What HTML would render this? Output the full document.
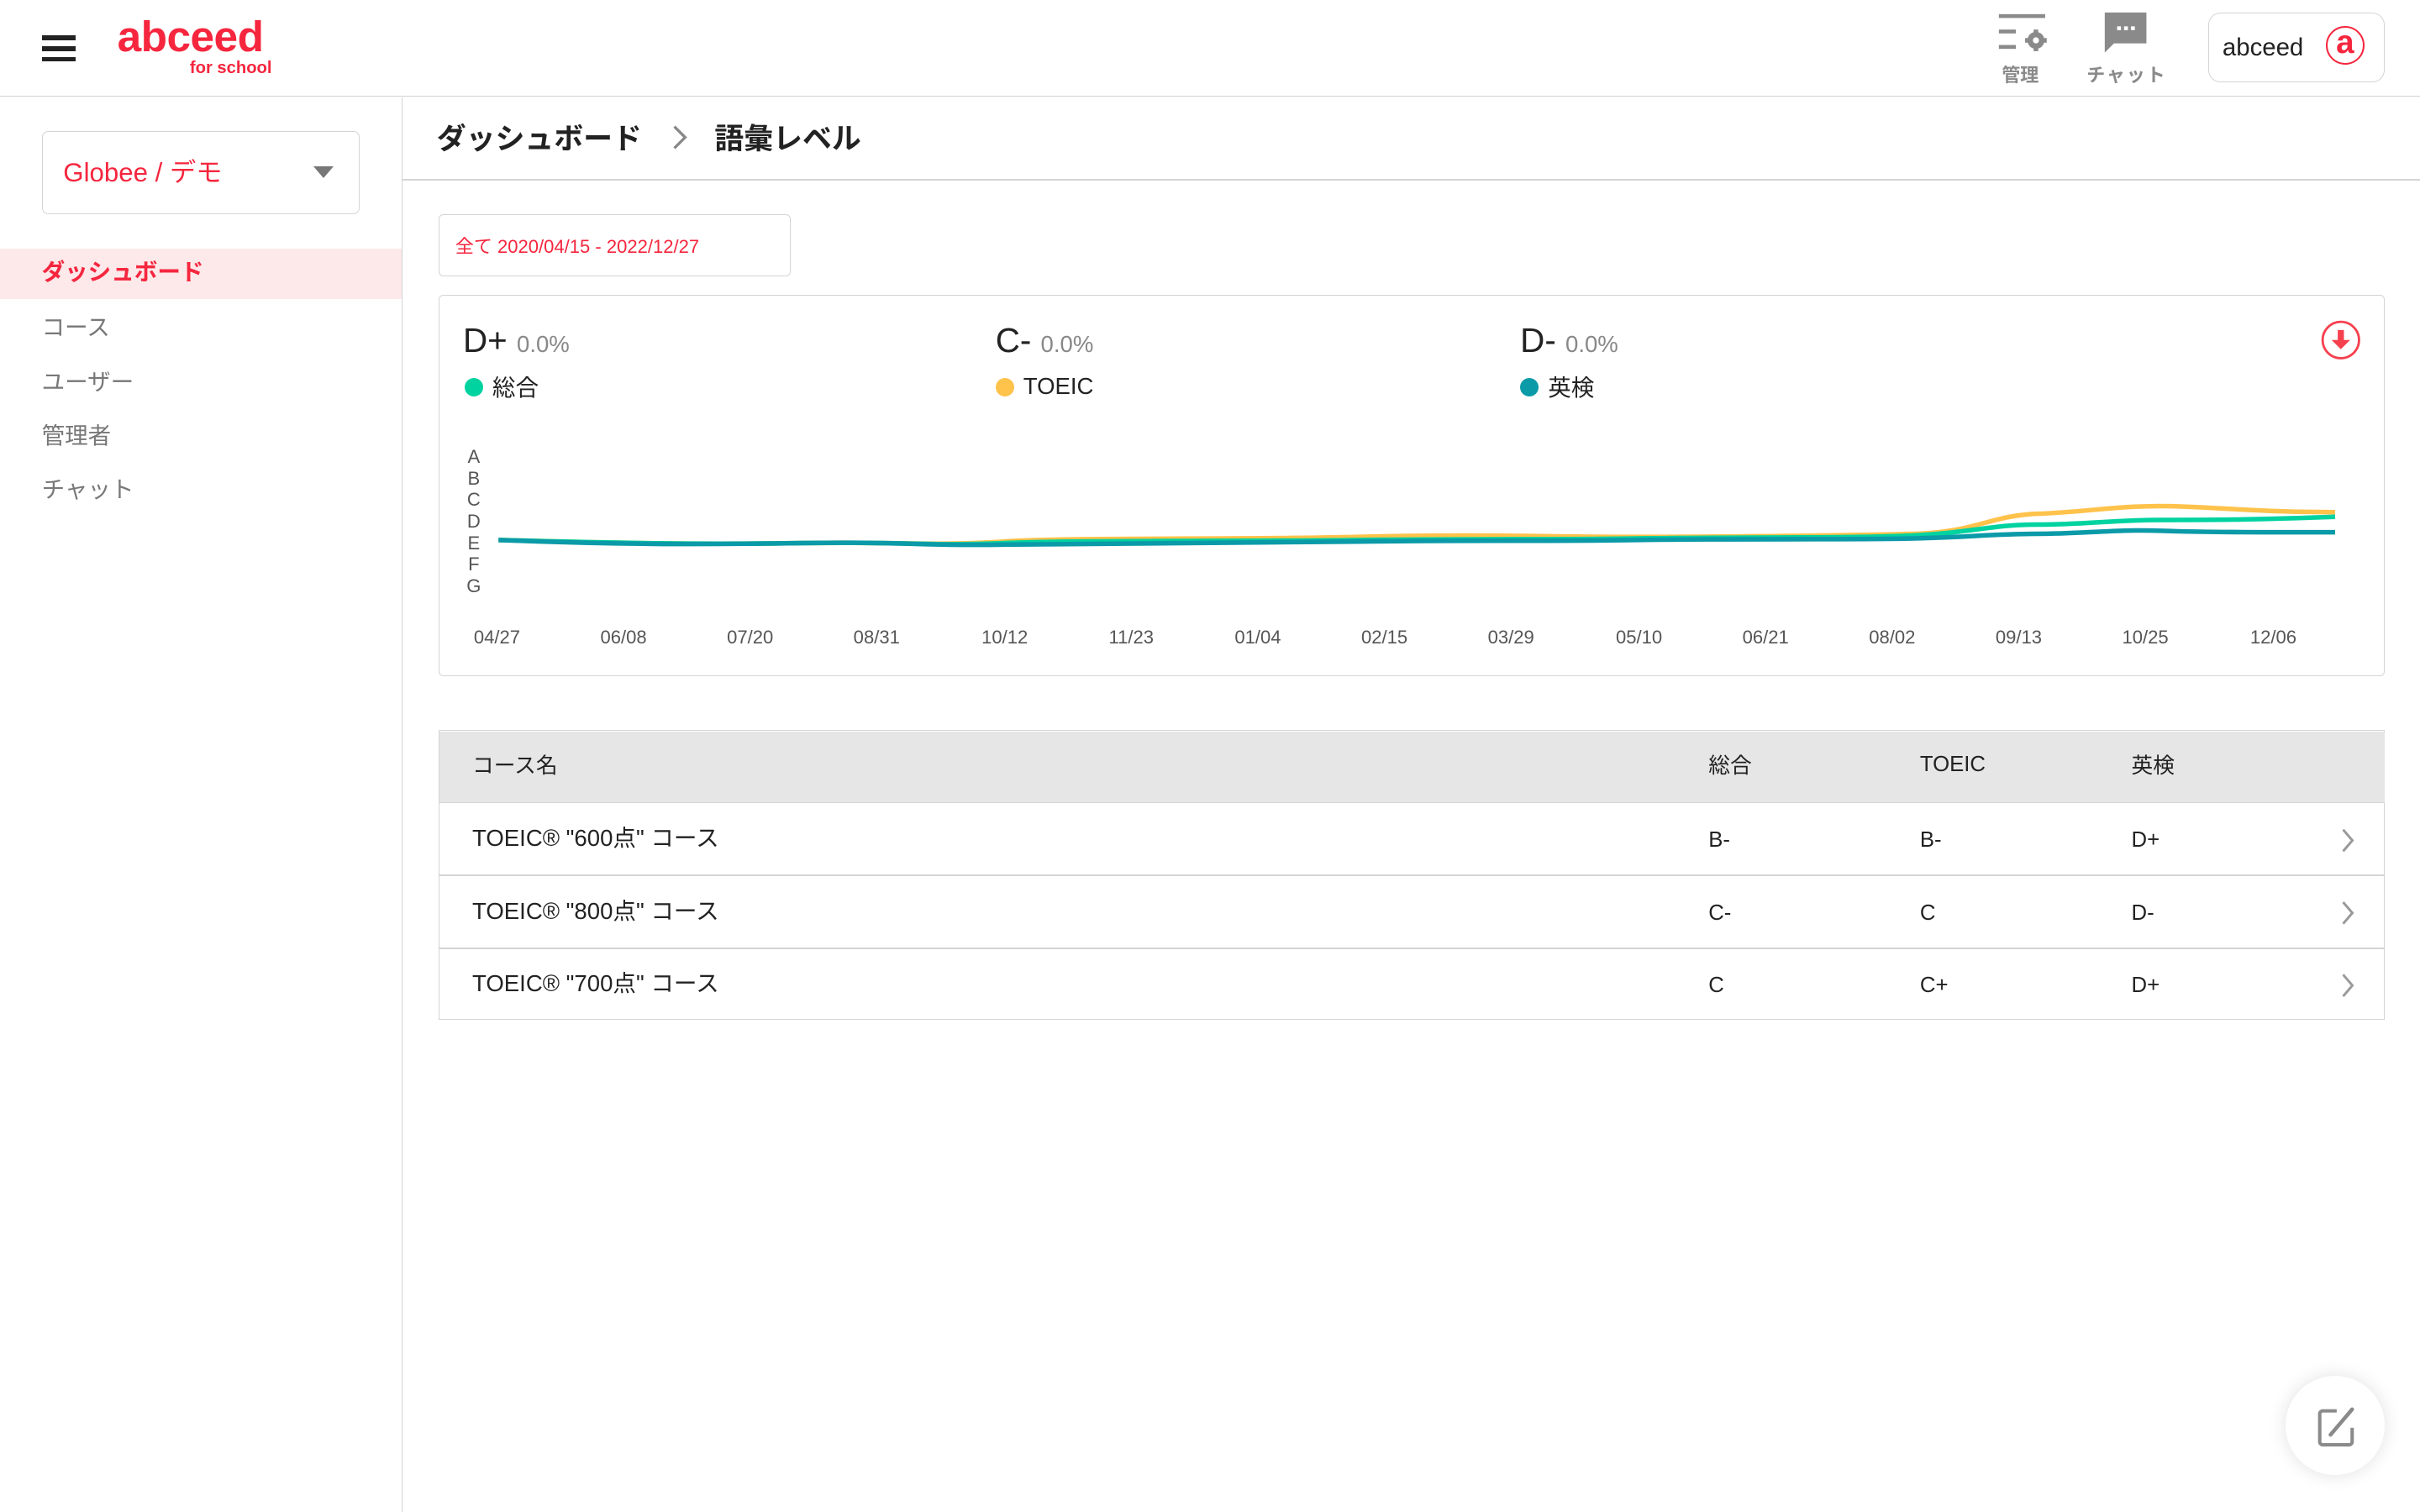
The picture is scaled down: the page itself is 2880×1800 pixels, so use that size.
<!DOCTYPE html>
<html><head><meta charset="utf-8"><style>
html,body{margin:0;padding:0;background:#fff;width:2880px;height:1800px;overflow:hidden}
#r{zoom:1.83673;width:1568px;height:980px;position:relative;font-family:"Liberation Sans","Noto Sans CJK JP",sans-serif;color:#222}
.a{position:absolute}
.red{color:#f5263e}
</style></head><body><div id="r">
<div class="a" style="left:0;top:0;width:1568px;height:62px;border-bottom:1px solid #d4d4d4"></div>
<div class="a" style="left:27px;top:23px;width:22px;height:3px;background:#222"></div>
<div class="a" style="left:27px;top:30px;width:22px;height:3px;background:#222"></div>
<div class="a" style="left:27px;top:37px;width:22px;height:3px;background:#222"></div>
<div class="a red" style="left:76px;top:7px;font-size:28px;font-weight:bold;letter-spacing:-0.3px">abceed</div>
<div class="a red" style="left:123px;top:38px;font-size:11px;font-weight:bold">for school</div>
<svg class="a" style="left:1294px;top:8px" width="34" height="28" viewBox="0 0 34 28"><g fill="#8a8a8a"><rect x="1" y="1" width="30" height="2.5"/><rect x="1" y="11" width="11" height="2.5"/><rect x="1" y="21" width="11" height="2.5"/><circle cx="25" cy="18" r="5.5"/><rect x="23.5" y="11" width="3" height="14"/><rect x="18" y="16.5" width="14" height="3"/><circle cx="25" cy="18" r="2" fill="#fff"/></g></svg>
<div class="a" style="left:1297px;top:39px;font-size:12px;color:#8a8a8a;font-weight:bold">管理</div>
<svg class="a" style="left:1363px;top:7px" width="30" height="28" viewBox="0 0 30 28"><path d="M1 1h27v20H7l-6 6z" fill="#8a8a8a"/><rect x="9" y="10" width="2.5" height="2.5" fill="#fff"/><rect x="13.5" y="10" width="2.5" height="2.5" fill="#fff"/><rect x="18" y="10" width="2.5" height="2.5" fill="#fff"/></svg>
<div class="a" style="left:1352px;top:39px;font-size:12px;color:#8a8a8a;font-weight:bold;letter-spacing:1px">チャット</div>
<div class="a" style="left:1431px;top:8px;width:113px;height:44px;border:1px solid #d4d4d4;border-radius:8px"></div>
<div class="a" style="left:1440px;top:22px;font-size:16px">abceed</div>
<div class="a" style="left:1507px;top:17px;width:25px;height:25px;border:1.5px solid #f5263e;border-radius:50%;box-sizing:border-box;color:#f5263e;font-size:21px;font-weight:bold;text-align:center;line-height:20px">a</div>

<div class="a" style="left:260px;top:63px;width:1px;height:917px;background:#d4d4d4"></div>
<div class="a" style="left:27px;top:85px;width:205px;height:53px;border:1px solid #d4d4d4;border-radius:4px"></div>
<div class="a red" style="left:41px;top:98px;font-size:17px">Globee / デモ</div>
<div class="a" style="left:203px;top:108px;width:0;height:0;border-left:7px solid transparent;border-right:7px solid transparent;border-top:8px solid #777"></div>
<div class="a" style="left:0;top:161px;width:260px;height:33px;background:#fde8ea"></div>
<div class="a red" style="left:27px;top:164px;font-size:15px;font-weight:bold">ダッシュボード</div>
<div class="a" style="left:27px;top:200px;font-size:15px;color:#777">コース</div>
<div class="a" style="left:27px;top:235px;font-size:15px;color:#777">ユーザー</div>
<div class="a" style="left:27px;top:270px;font-size:15px;color:#777">管理者</div>
<div class="a" style="left:27px;top:305px;font-size:15px;color:#777">チャット</div>

<div class="a" style="left:283px;top:75px;font-size:19px;font-weight:bold">ダッシュボード</div>
<svg class="a" style="left:434px;top:80px" width="12" height="18"><path d="M3 2l7 7-7 7" stroke="#888" stroke-width="1.8" fill="none"/></svg>
<div class="a" style="left:463px;top:75px;font-size:19px;font-weight:bold">語彙レベル</div>
<div class="a" style="left:261px;top:116px;width:1307px;height:1px;background:#d4d4d4"></div>

<div class="a" style="left:284px;top:139px;width:227px;height:39px;border:1px solid #d4d4d4;border-radius:3px"></div>
<div class="a red" style="left:295px;top:150px;font-size:12px">全て 2020/04/15 - 2022/12/27</div>

<div class="a" style="left:284px;top:191px;width:1260px;height:246px;border:1px solid #d4d4d4;border-radius:3px"></div>
<div class="a" style="left:300px;top:208px;font-size:22px">D+ <span style="font-size:15px;color:#888">0.0%</span></div>
<div class="a" style="left:645px;top:208px;font-size:22px">C- <span style="font-size:15px;color:#888">0.0%</span></div>
<div class="a" style="left:985px;top:208px;font-size:22px">D- <span style="font-size:15px;color:#888">0.0%</span></div>
<div class="a" style="left:301px;top:245px;width:12px;height:12px;border-radius:50%;background:#00d3a0"></div>
<div class="a" style="left:319px;top:239px;font-size:15px">総合</div>
<div class="a" style="left:645px;top:245px;width:12px;height:12px;border-radius:50%;background:#ffc24b"></div>
<div class="a" style="left:663px;top:242px;font-size:15px">TOEIC</div>
<div class="a" style="left:985px;top:245px;width:12px;height:12px;border-radius:50%;background:#0b9aa8"></div>
<div class="a" style="left:1003px;top:239px;font-size:15px">英検</div>
<svg class="a" style="left:1503px;top:207px" width="27" height="27" viewBox="0 0 27 27"><circle cx="13.5" cy="13.5" r="11.8" fill="none" stroke="#f5404e" stroke-width="1.5"/><rect x="11.5" y="7" width="4" height="7" fill="#f5404e"/><path d="M7.5 13.5h12l-6 6z" fill="#f5404e"/></svg>
<div class="a" style="left:301px;top:289px;font-size:12px;line-height:14px;color:#555;width:12px;text-align:center">A<br>B<br>C<br>D<br>E<br>F<br>G</div>
<svg class="a" style="left:0;top:0" width="1568" height="420">
<path d="M323 350 C400 352,450 353,520 352 S600 354,650 351 S800 350,880 348 S1000 348,1060 348 S1200 347,1240 346 S1290 334,1320 333 S1370 328,1400 328 S1460 332,1513 332" stroke="#ffc24b" stroke-width="3" fill="none"/>
<path d="M323 350 C400 352,450 353,520 352 S600 354,650 352 S800 351,880 350 S1000 350,1060 349 S1200 349,1240 347 S1290 340,1320 340 S1370 337,1400 337 S1460 337,1513 335" stroke="#00d3a0" stroke-width="3" fill="none"/>
<path d="M323 350 C400 353,450 353,520 352 S600 354,650 353 S800 352,880 351 S1000 351,1060 350 S1200 350,1240 349 S1290 346,1320 346 S1370 343,1400 344 S1460 345,1513 345" stroke="#0b9aa8" stroke-width="3" fill="none"/>
<g font-size="12" fill="#555" font-family="Liberation Sans" text-anchor="middle">
<text x="322" y="417">04/27</text><text x="404" y="417">06/08</text><text x="486" y="417">07/20</text><text x="568" y="417">08/31</text><text x="651" y="417">10/12</text><text x="733" y="417">11/23</text><text x="815" y="417">01/04</text><text x="897" y="417">02/15</text><text x="979" y="417">03/29</text><text x="1062" y="417">05/10</text><text x="1144" y="417">06/21</text><text x="1226" y="417">08/02</text><text x="1308" y="417">09/13</text><text x="1390" y="417">10/25</text><text x="1473" y="417">12/06</text></g>
</svg>

<div class="a" style="left:284px;top:473px;width:1260px;height:187px;border:1px solid #d4d4d4"></div>
<div class="a" style="left:285px;top:474px;width:1260px;height:46px;background:#e6e6e6;border-bottom:1px solid #d4d4d4"></div>
<div class="a" style="left:285px;top:567px;width:1260px;height:1px;background:#d4d4d4"></div>
<div class="a" style="left:285px;top:614px;width:1260px;height:1px;background:#d4d4d4"></div>
<div class="a" style="left:306px;top:485px;font-size:14px">コース名</div>
<div class="a" style="left:1107px;top:485px;font-size:14px">総合</div>
<div class="a" style="left:1244px;top:488px;font-size:14px">TOEIC</div>
<div class="a" style="left:1381px;top:485px;font-size:14px">英検</div>
<div class="a" style="left:306px;top:531px;font-size:15px">TOEIC® "600点" コース</div>
<div class="a" style="left:1107px;top:537px;font-size:14px">B-</div><div class="a" style="left:1244px;top:537px;font-size:14px">B-</div><div class="a" style="left:1381px;top:537px;font-size:14px">D+</div>
<div class="a" style="left:306px;top:578px;font-size:15px">TOEIC® "800点" コース</div>
<div class="a" style="left:1107px;top:584px;font-size:14px">C-</div><div class="a" style="left:1244px;top:584px;font-size:14px">C</div><div class="a" style="left:1381px;top:584px;font-size:14px">D-</div>
<div class="a" style="left:306px;top:625px;font-size:15px">TOEIC® "700点" コース</div>
<div class="a" style="left:1107px;top:631px;font-size:14px">C</div><div class="a" style="left:1244px;top:631px;font-size:14px">C+</div><div class="a" style="left:1381px;top:631px;font-size:14px">D+</div>
<svg class="a" style="left:1515px;top:536px" width="12" height="120"><g stroke="#999" stroke-width="1.6" fill="none"><path d="M3 2l6 7-6 7"/><path d="M3 49l6 7-6 7"/><path d="M3 96l6 7-6 7"/></g></svg>

<div class="a" style="left:1481px;top:892px;width:64px;height:64px;border-radius:50%;background:#fff;box-shadow:0 0 12px rgba(0,0,0,0.12)"></div>
<svg class="a" style="left:1501px;top:912px" width="26" height="26" viewBox="0 0 26 26"><path d="M13 2.5H4a2 2 0 0 0-2 2v18a2 2 0 0 0 2 2h17a2 2 0 0 0 2-2v-9" stroke="#8a8a8a" stroke-width="2.2" fill="none"/><path d="M23 1.5L9 18" stroke="#8a8a8a" stroke-width="2.5" stroke-linecap="round"/></svg>
</div></body></html>
